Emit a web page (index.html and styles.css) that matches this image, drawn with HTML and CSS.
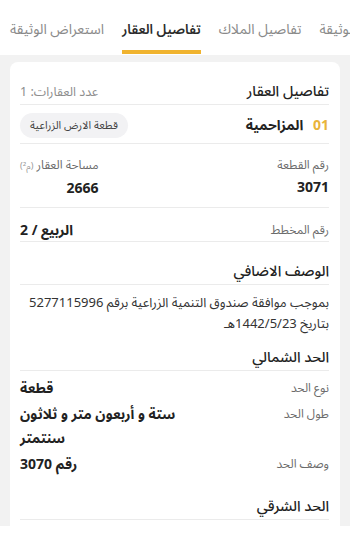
FILE: index.html
```html
<!DOCTYPE html>
<html lang="ar" dir="rtl">
<head>
    <meta charset="UTF-8">
    <meta name="viewport" content="width=device-width, initial-scale=1.0">
    <title>تفاصيل العقار</title>
    <link rel="stylesheet" href="styles.css">
</head>
<body>
    <nav class="tabs">
        <div class="tab">استعراض الوثيقة</div>
        <div class="tab active">تفاصيل العقار</div>
        <div class="tab">تفاصيل الملاك</div>
        <div class="tab">بيانات الوثيقة</div>
    </nav>

    <main class="page">
        <section class="card">
            <div class="section-title first">
                <span>تفاصيل العقار</span>
                <span class="count">عدد العقارات: 1</span>
            </div>

            <div class="property-row">
                <div class="property-name"><span class="num">01</span> المزاحمية</div>
                <div class="chip">قطعة الارض الزراعية</div>
            </div>

            <div class="info-pair">
                <div class="info">
                    <div class="label">رقم القطعة</div>
                    <div class="value">3071</div>
                </div>
                <div class="info">
                    <div class="label">مساحة العقار <small>(م²)</small></div>
                    <div class="value">2666</div>
                </div>
            </div>

            <div class="plan-row">
                <div class="label">رقم المخطط</div>
                <div class="value">الربيع / 2</div>
            </div>

            <div class="section-title">الوصف الاضافي</div>
            <p class="desc"><span class="keep">بموجب موافقة صندوق التنمية الزراعية برقم 5277115996</span> بتاريخ 1442/5/23هـ</p>

            <div class="section-title">الحد الشمالي</div>
            <div class="kv-list">
                <div class="kv">
                    <div class="label">نوع الحد</div>
                    <div class="value">قطعة</div>
                </div>
                <div class="kv">
                    <div class="label">طول الحد</div>
                    <div class="value">ستة و أربعون متر و ثلاثون سنتمتر</div>
                </div>
                <div class="kv">
                    <div class="label">وصف الحد</div>
                    <div class="value">رقم 3070</div>
                </div>
            </div>

            <div class="section-title">الحد الشرقي</div>
        </section>
    </main>

    <div class="bottom-bar"></div>
</body>
</html>
```

FILE: styles.css
```css
* {
    box-sizing: border-box;
}
body {
    margin: 0;
    height: 100vh;
    display: flex;
    flex-direction: column;
    overflow: hidden;
    font-family: 'Noto Sans Arabic', 'DejaVu Sans', sans-serif;
    font-size: 14px;
    line-height: 20px;
    color: #262626;
    background: #fff;
}
.tabs {
    direction: ltr;
    display: flex;
    gap: 18px;
    padding-left: 10px;
    height: 55px;
    overflow: hidden;
    white-space: nowrap;
    flex-shrink: 0;
}
.tab {
    direction: rtl;
    height: 54px;
    padding-top: 20px;
    font-size: 14px;
    line-height: 20px;
    color: #8a8a8a;
    border-bottom: 4px solid transparent;
}
.tab.active {
    color: #2b2b2b;
    font-weight: 600;
    font-size: 13.5px;
    border-bottom-color: #f0b32e;
}
.page {
    flex: 1;
    background: #f2f2f2;
    padding: 7px 10px 0;
    overflow: hidden;
}
.card {
    background: #fff;
    border-radius: 8px;
    padding: 7px 11px 20px 10px;
}
.section-title {
    display: flex;
    justify-content: space-between;
    align-items: center;
    padding-top: 11px;
    margin-top: 7px;
    font-size: 14.5px;
    line-height: 24px;
    font-weight: 500;
    color: #222;
    border-bottom: 1px solid #ebebeb;
}
.section-title.first {
    margin-top: 0;
}
.count {
    font-size: 12.5px;
    font-weight: normal;
    color: #8c8c8c;
}
.property-row {
    display: flex;
    justify-content: space-between;
    align-items: center;
    padding: 8px 0 5px;
    border-bottom: 1px solid #ebebeb;
}
.property-name {
    font-size: 14px;
    font-weight: bold;
    color: #222;
}
.num {
    color: #e9b43a;
    margin-left: 6px;
}
.chip {
    background: #f2f2f4;
    border-radius: 13px;
    height: 25px;
    line-height: 25px;
    padding: 0 10px;
    font-size: 11px;
    color: #444;
}
.label {
    font-size: 12px;
    color: #6b6b6b;
}
.label small {
    font-size: 9px;
    color: #999;
}
.value {
    font-size: 14px;
    font-weight: bold;
    color: #222;
}
.info-pair {
    display: flex;
    justify-content: space-between;
    padding: 12px 0 8px;
    border-bottom: 1px solid #ebebeb;
}
.info .label {
    line-height: 20px;
}
.info .value {
    margin-top: 2px;
}
.plan-row {
    display: flex;
    justify-content: space-between;
    align-items: center;
    padding-top: 13px;
    border-bottom: 1px solid #ebebeb;
}
.desc {
    margin: 0;
    padding-top: 8px;
    font-size: 13px;
    line-height: 21px;
    color: #333;
}
.desc .keep {
    white-space: nowrap;
}
.desc + .section-title {
    margin-top: 0;
}
.kv-list {
    padding-top: 6px;
}
.kv {
    display: flex;
    justify-content: space-between;
    align-items: flex-start;
    margin-bottom: 2px;
    line-height: 24px;
}
.kv .value {
    max-width: 168px;
    text-align: left;
}
.bottom-bar {
    height: 9px;
    flex-shrink: 0;
    background: #fff;
}
```
